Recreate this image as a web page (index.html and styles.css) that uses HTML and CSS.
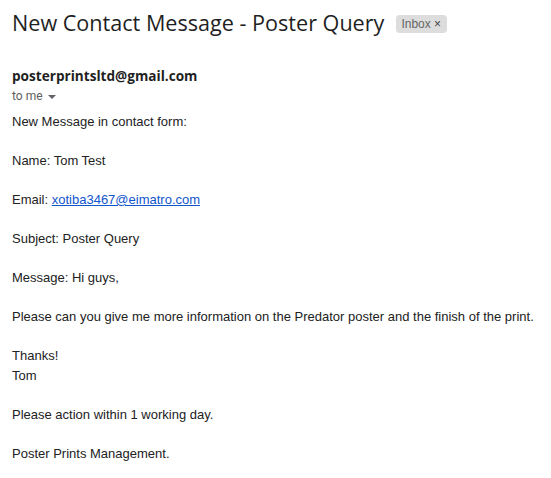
FILE: index.html
```html
<!DOCTYPE html>
<html>
<head>
<meta charset="utf-8">
<link rel="stylesheet" href="styles.css">
</head>
<body>
<div class="mail">
  <div class="subject-row">
    <h1 class="subject">New Contact Message - Poster Query</h1>
    <span class="chip">Inbox <span class="chip-x">×</span></span>
  </div>
  <div class="sender">posterprintsltd@gmail.com</div>
  <div class="to">to me <svg class="caret" width="8" height="4" viewBox="0 0 8 4"><path d="M0 0h8L4 4z" fill="#5f6368"/></svg></div>
  <div class="body">
    <p>New Message in contact form:</p>
    <p>Name: Tom Test</p>
    <p>Email: <a href="#">xotiba3467@eimatro.com</a></p>
    <p>Subject: Poster Query</p>
    <p>Message: Hi guys,</p>
    <p>Please can you give me more information on the Predator poster and the finish of the print.</p>
    <p>Thanks!<br>Tom</p>
    <p>Please action within 1 working day.</p>
    <p>Poster Prints Management.</p>
  </div>
</div>
</body>
</html>
```

FILE: styles.css
```css
html, body {
  margin: 0;
  padding: 0;
  background: #fff;
}
.mail {
  padding: 8px 12px 0 12px;
  color: #222;
}
.subject-row {
  display: flex;
  align-items: center;
  gap: 12px;
  height: 30px;
}
.subject {
  margin: 0;
  font-family: "Open Sans", sans-serif;
  font-weight: 400;
  font-size: 21.6px;
  color: #1f1f1f;
  line-height: 30px;
}
.chip {
  font-family: "Liberation Sans", Arial, sans-serif;
  font-size: 12px;
  color: #666;
  background: #ddd;
  border-radius: 4px;
  padding: 1px 6px 1px 5px;
  line-height: 16px;
  margin-top: 1px;
}
.chip-x {
  font-size: 12px;
  color: #444;
}
.sender {
  margin-top: 28px;
  font-family: "Open Sans", sans-serif;
  font-weight: 700;
  font-size: 13.6px;
  line-height: 20px;
  color: #1f1f1f;
}
.to {
  font-family: "Roboto", sans-serif;
  font-size: 12px;
  line-height: 20px;
  color: #5e5e5e;
  display: flex;
  align-items: center;
  gap: 5px;
}
.caret {
  margin-top: 1px;
}
.body {
  margin-top: 6px;
  font-family: "Liberation Sans", Arial, sans-serif;
  font-size: 13px;
  line-height: 19.5px;
  color: #222;
}
.body p {
  margin: 0 0 19.5px 0;
}
.body a {
  color: #15c;
}
```
